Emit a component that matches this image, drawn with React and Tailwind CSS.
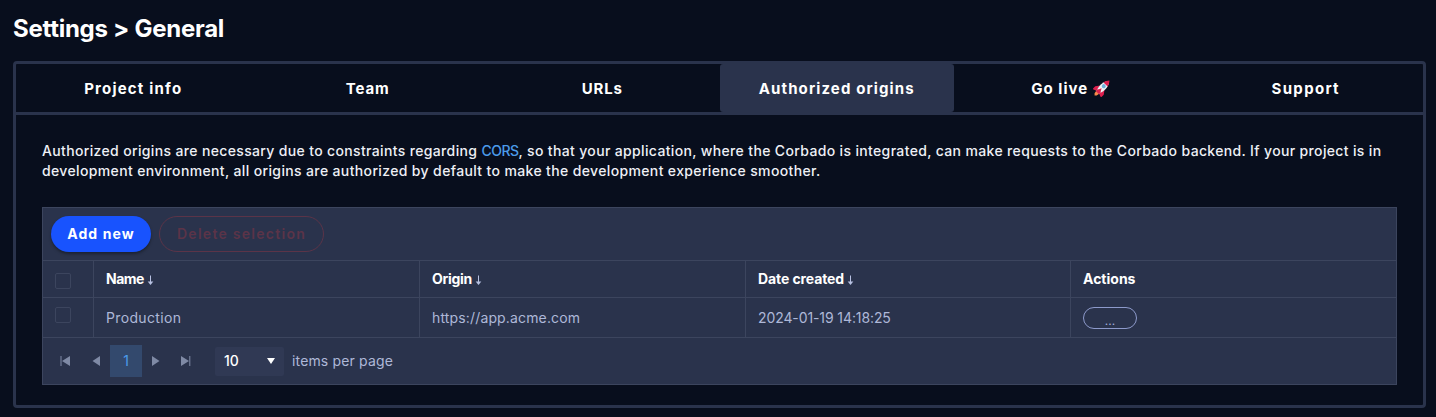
import React from "react";

function Rocket() {
  return (
    <svg width="18" height="18" viewBox="0 0 36 36" className="mb-0.5 ml-[5px] shrink-0">
      <g transform="rotate(45 18 18)">
        <path fill="#f7894a" d="M14 30H22L21 36 18 39 15 36Z" />
        <path fill="#dd1f4e" d="M12 17 6 25V33L14 30ZM24 17 30 25V33L22 30Z" />
        <path fill="#f1f3f5" d="M18 -2C24 4 25 12 24.500 20L22 30H14L11.500 20C11 12 12 4 18 -2Z" />
        <path fill="#dd1f4e" d="M18 -3C21 0 23 4 23.800 8H12.200C13 4 15 0 18 -3Z" />
        <circle cx="18" cy="13" r="4" fill="#6fb2dc" />
        <path fill="#dd1f4e" d="M18 19 20.500 24 23 27 22 31H14L13 27 15.500 24Z" />
      </g>
    </svg>
  );
}

function Arrow() {
  return (
    <svg width="7" height="11" viewBox="0 0 7 11" className="ml-[3px] mt-[3px] shrink-0" fill="none">
      <path d="M3.5 0.5V9" stroke="#b7c1e2" strokeWidth="1" />
      <path d="M0.7 6.5H6.3L3.5 10Z" fill="#b7c1e2" />
    </svg>
  );
}

function Head({ label, text, arrow = true }) {
  return (
    <div className="flex h-full items-center border-l border-[#3c455e] pl-3 font-bold text-white">
      <span className={text}>{label}</span>
      {arrow && <Arrow />}
    </div>
  );
}

const tabs = [
  { label: "Project info", text: "tracking-[1.2px]" },
  { label: "Team", text: "tracking-[0.9px]" },
  { label: "URLs", text: "tracking-[0.8px]" },
  { label: "Authorized origins", text: "tracking-[1.12px]", active: true },
  { label: "Go live", text: "tracking-[1px]", rocket: true },
  { label: "Support", text: "tracking-[1.3px]" },
];

const columns = "grid grid-cols-[50px_326px_326px_325px_1fr]";

export default function App() {
  return (
    <div className="h-[417px] overflow-hidden whitespace-nowrap bg-[#080e1d] pl-[13px] pr-2.5 font-['Inter',sans-serif] text-[14px] leading-5 text-white">
      <h1 className="h-[61px] pt-[13px] text-[24px] font-bold leading-8 tracking-[-0.27px]">Settings &gt; General</h1>
      <div className="h-[347px] rounded-[4px] border-[3px] border-[#2a334c]">
        <div className="grid h-[51px] grid-cols-6 border-b-[3px] border-[#2a334c]">
          {tabs.map((t) => (
            <div
              key={t.label}
              className={
                "flex items-center justify-center rounded-[3px] pt-0.5 text-[15px] font-bold " +
                (t.active ? "bg-[#2a334c]" : "")
              }
            >
              <span className={t.text}>{t.label}</span>
              {t.rocket && <Rocket />}
            </div>
          ))}
        </div>
        <div className="px-[26px] pt-[26px]">
          <p className="text-[14px] font-medium leading-5 text-[#eef0f6]">
            <span className="block tracking-[0.35px]">
              Authorized origins are necessary due to constraints regarding <a className="tracking-[-0.5px] text-[#4b9bea]">CORS</a>, so that your application, where the Corbado is integrated, can make requests to the Corbado backend. If your project is in
            </span>
            <span className="block tracking-[0.36px]">
              development environment, all origins are authorized by default to make the development experience smoother.
            </span>
          </p>
          <div className="mt-[26px] h-[178px] border border-[#3c455e] bg-[#2a334c] text-[#aeb8d8]">
            <div className="flex h-[53px] gap-2 border-b border-[#3c455e] pl-2 pt-2">
              <button className="h-9 w-[100px] rounded-full bg-[#1853fe] text-[14px] font-bold tracking-[1.1px] text-white shadow-[0_2px_3px_rgba(0,0,0,0.35)]">Add new</button>
              <button className="h-9 w-[165px] rounded-full border border-[#5b3448] text-[14px] font-semibold tracking-[1.27px] text-[#5b3448]">Delete selection</button>
            </div>
            <div className={columns + " h-[37px] border-b border-[#3c455e]"}>
              <div className="pl-3 pt-3">
                <div className="size-4 rounded-[2px] border border-[#3c455e]" />
              </div>
              <Head label="Name" text="tracking-[-0.5px]" />
              <Head label="Origin" text="tracking-[-0.3px]" />
              <Head label="Date created" text="tracking-[-0.1px]" />
              <Head label="Actions" text="tracking-[0px]" arrow={false} />
            </div>
            <div className={columns + " h-10 border-b border-[#3c455e]"}>
              <div className="pl-3 pt-[9px]">
                <div className="size-4 rounded-[2px] border border-[#3c455e]" />
              </div>
              <div className="flex items-center border-l border-[#3c455e] pl-3"><span className="tracking-[0.35px]">Production</span></div>
              <div className="flex items-center border-l border-[#3c455e] pl-3"><span className="tracking-[0.15px]">https://app.acme.com</span></div>
              <div className="flex items-center border-l border-[#3c455e] pl-3"><span className="tracking-[-0.1px]">2024-01-19 14:18:25</span></div>
              <div className="flex items-center border-l border-[#3c455e] pl-3">
                <button className="h-[22px] w-[54px] rounded-full border border-[#8d9acb] pt-[5px] text-[12px] leading-4 text-[#a0acda]">...</button>
              </div>
            </div>
            <div className="flex h-[46px] items-center">
              <svg width="11" height="12" viewBox="0 0 11 12" className="ml-[17px]" fill="#7f8aa5">
                <path d="M0.5 1H1.5V11H0.5ZM10 1V11L2 6Z" />
              </svg>
              <svg width="9" height="12" viewBox="0 0 9 12" className="ml-[21px]" fill="#7f8aa5">
                <path d="M8 1V11L0.5 6Z" />
              </svg>
              <div className="ml-[9px] flex size-8 items-center justify-center bg-[#33496d] text-[#4b9bea]">1</div>
              <svg width="9" height="12" viewBox="0 0 9 12" className="ml-[10px]" fill="#7f8aa5">
                <path d="M0 1V11L7.5 6Z" />
              </svg>
              <svg width="11" height="12" viewBox="0 0 11 12" className="ml-5" fill="#7f8aa5">
                <path d="M0 1V11L8 6ZM8.3 1H9.3V11H8.3Z" />
              </svg>
              <div className="ml-[23px] flex h-[29px] w-[69px] items-center justify-between rounded-[2px] bg-[#303954] pl-[9px] pr-[9px] text-white">
                <span className="font-medium">10</span>
                <svg width="8" height="6" viewBox="0 0 8 6" fill="#fff">
                  <path d="M0 0H8L4 6Z" />
                </svg>
              </div>
              <span className="ml-2 tracking-[0.15px]">items per page</span>
            </div>
          </div>
        </div>
      </div>
    </div>
  );
}
